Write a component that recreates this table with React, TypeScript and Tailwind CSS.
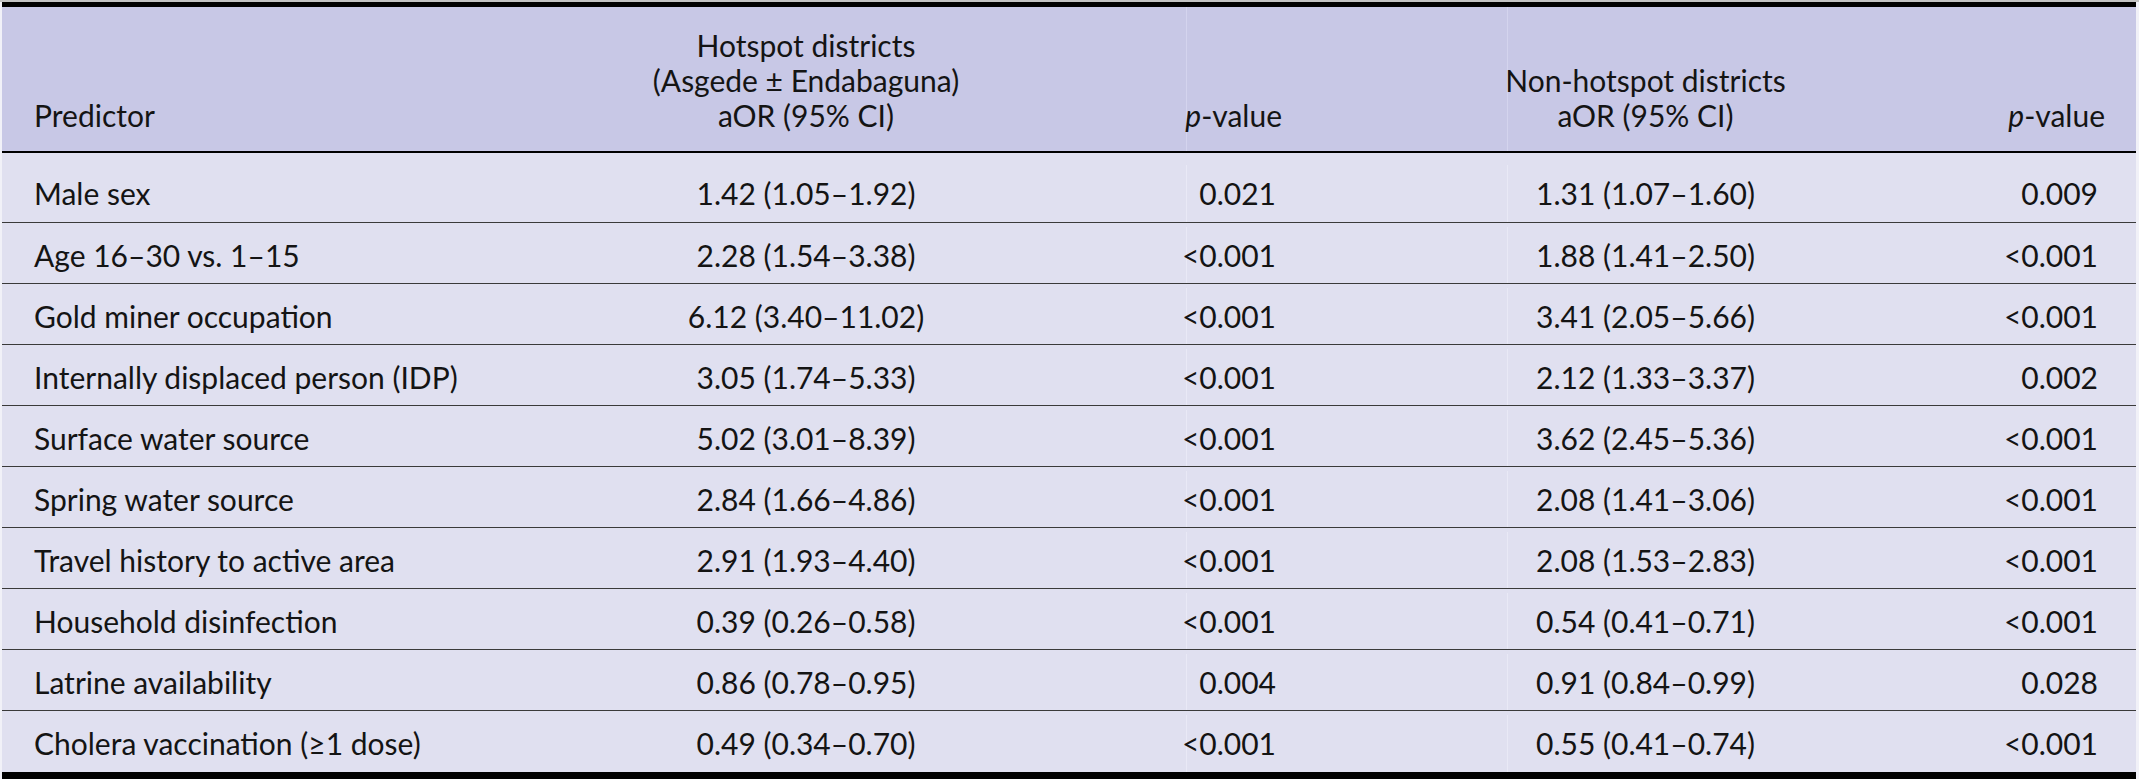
import * as React from "react";

interface Row {
  predictor: string;
  hotOr: string;
  hotP: string;
  nonOr: string;
  nonP: string;
}

const rows: Row[] = [
  { predictor: "Male sex", hotOr: "1.42 (1.05–1.92)", hotP: "0.021", nonOr: "1.31 (1.07–1.60)", nonP: "0.009" },
  { predictor: "Age 16–30 vs. 1–15", hotOr: "2.28 (1.54–3.38)", hotP: "<0.001", nonOr: "1.88 (1.41–2.50)", nonP: "<0.001" },
  { predictor: "Gold miner occupation", hotOr: "6.12 (3.40–11.02)", hotP: "<0.001", nonOr: "3.41 (2.05–5.66)", nonP: "<0.001" },
  { predictor: "Internally displaced person (IDP)", hotOr: "3.05 (1.74–5.33)", hotP: "<0.001", nonOr: "2.12 (1.33–3.37)", nonP: "0.002" },
  { predictor: "Surface water source", hotOr: "5.02 (3.01–8.39)", hotP: "<0.001", nonOr: "3.62 (2.45–5.36)", nonP: "<0.001" },
  { predictor: "Spring water source", hotOr: "2.84 (1.66–4.86)", hotP: "<0.001", nonOr: "2.08 (1.41–3.06)", nonP: "<0.001" },
  { predictor: "Travel history to active area", hotOr: "2.91 (1.93–4.40)", hotP: "<0.001", nonOr: "2.08 (1.53–2.83)", nonP: "<0.001" },
  { predictor: "Household disinfection", hotOr: "0.39 (0.26–0.58)", hotP: "<0.001", nonOr: "0.54 (0.41–0.71)", nonP: "<0.001" },
  { predictor: "Latrine availability", hotOr: "0.86 (0.78–0.95)", hotP: "0.004", nonOr: "0.91 (0.84–0.99)", nonP: "0.028" },
  { predictor: "Cholera vaccination (≥1 dose)", hotOr: "0.49 (0.34–0.70)", hotP: "<0.001", nonOr: "0.55 (0.41–0.74)", nonP: "<0.001" },
];

const cols = "grid grid-cols-[424px_760px_104px_217px_276px_353px]";

export default function App() {
  return (
    <div
      className="min-h-[779px] w-[2139px] bg-[#f1f1f8] text-[30px] text-[#141414]"
      style={{ fontFamily: "Lato, 'Noto Sans', sans-serif" }}
    >
      <div className="h-[2px] bg-[#c2c2c2]" />
      <div className="ml-[2px] w-[2134px] border-t-[5px] border-b-[7px] border-black">
        {/* header */}
        <div className={`${cols} h-[146px] border-b-2 border-black bg-[#c8c8e6] leading-[35px]`}>
          <div className="flex items-end pb-[18px] pl-[32px]">Predictor</div>
          <div className="flex flex-col items-center justify-end whitespace-nowrap pb-[18px] text-center">
            <span>Hotspot districts</span>
            <span>(Asgede ± Endabaguna)</span>
            <span>aOR (95% CI)</span>
          </div>
          <div className="flex items-end justify-end border-l border-[#d4d4ee] pb-[18px] pr-[8px]">
            <span className="whitespace-nowrap">
              <i>p</i>-value
            </span>
          </div>
          <div />
          <div className="flex flex-col items-center justify-end whitespace-nowrap border-l border-[#d4d4ee] pb-[18px] text-center">
            <span>Non-hotspot districts</span>
            <span>aOR (95% CI)</span>
          </div>
          <div className="flex items-end justify-end pb-[18px] pr-[31px]">
            <span className="whitespace-nowrap">
              <i>p</i>-value
            </span>
          </div>
        </div>

        {/* body */}
        {rows.map((row, i) => (
          <div
            key={row.predictor}
            className={`${cols} bg-[#e0e0f0] ${
              i === 0 ? "h-[70px] pt-[12px]" : "h-[61px] pt-[4px]"
            } ${i < rows.length - 1 ? "border-b border-[#3a3a3a]" : ""}`}
          >
            <div className="flex items-center whitespace-nowrap pl-[32px]">{row.predictor}</div>
            <div className="flex items-center justify-center whitespace-nowrap">{row.hotOr}</div>
            <div className="flex items-center justify-end border-l border-[#e9e9f6] pr-[14px]">{row.hotP}</div>
            <div />
            <div className="flex items-center justify-center whitespace-nowrap border-l border-[#e9e9f6]">
              {row.nonOr}
            </div>
            <div className="flex items-center justify-end pr-[38px]">{row.nonP}</div>
          </div>
        ))}
      </div>
    </div>
  );
}
